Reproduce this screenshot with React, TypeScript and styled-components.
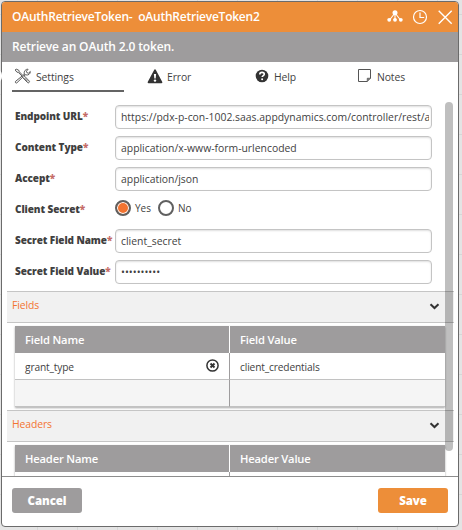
import React from "react";
import styled, { createGlobalStyle, css } from "styled-components";

const GlobalStyle = createGlobalStyle`
  *, *::before, *::after { box-sizing: border-box; }
  html, body { margin: 0; padding: 0; overflow: hidden; }
  body { font-family: "Open Sans", "Noto Sans", sans-serif; color: #3f3f3f; }
`;

const Canvas = styled.div`
  position: relative;
  width: 462px;
  height: 530px;
  padding: 1px 0 0 1px;
  overflow: hidden;
  background-color: #e4e4e4;
  background-image: linear-gradient(to right, #d6d6d6 1px, transparent 1px),
    linear-gradient(to bottom, #d6d6d6 1px, transparent 1px);
  background-size: 40px 40px;
  background-position: 37px 14px;
`;

const Connector = styled.span`
  position: absolute;
  left: -9px;
  top: 69px;
  width: 11px;
  height: 14px;
  border-radius: 0 6px 6px 0;
  background: #fff;
`;

const Dialog = styled.section`
  display: flex;
  flex-direction: column;
  width: 458px;
  height: 526px;
  border: 1px solid #6b6b6b;
  border-radius: 4px;
  background: #fff;
  overflow: hidden;
`;

const TitleBar = styled.header`
  display: flex;
  align-items: center;
  flex: 0 0 30px;
  padding: 0 5px 0 10px;
  background: #ed8e39;
  color: #fff;
`;

const Title = styled.h1`
  flex: 1;
  margin: 0;
  font-size: 12px;
  line-height: 30px;
  font-weight: 600;
  letter-spacing: -0.23px;
  white-space: pre;
`;

const TitleIcons = styled.div`
  display: flex;
  align-items: center;
  gap: 9px;
  svg { display: block; }
  svg:first-child { margin-top: -2px; }
`;

const Subtitle = styled.div`
  flex: 0 0 30px;
  padding-left: 10px;
  background: #9e9c9d;
  color: #fff;
  font-size: 12px;
  line-height: 29px;
  font-weight: 600;
  letter-spacing: -0.15px;
`;

const Tabs = styled.nav`
  display: grid;
  grid-template-columns: 112px 112px 112px 90px;
  flex: 0 0 33px;
  padding-left: 10px;
`;

const Tab = styled.div<{ $active?: boolean; $inset: number; $gap: number }>`
  display: flex;
  align-items: center;
  gap: ${(p) => p.$gap}px;
  height: 30px;
  padding-left: ${(p) => p.$inset}px;
  border-bottom: 2px solid ${(p) => (p.$active ? "#646464" : "transparent")};
  font-size: 10.4px;
  line-height: 28px;
  letter-spacing: -0.1px;
  svg { display: block; flex: none; }
  span { padding-top: 2px; }
`;

const Body = styled.main`
  position: relative;
  flex: 1;
  min-height: 0;
  overflow: hidden;
  padding: 10px 4px 0 5px;
`;

const ScrollThumb = styled.span`
  position: absolute;
  left: 443px;
  top: 7px;
  width: 8px;
  height: 349px;
  border-radius: 4px;
  background: rgba(0, 0, 0, 0.25);
`;

const Form = styled.div`
  display: flex;
  flex-direction: column;
  gap: 7px;
  padding: 0 22px 7px 8px;
`;

const FormRow = styled.div`
  display: flex;
  height: 24px;
`;

const Label = styled.label`
  flex: 0 0 100px;
  font-size: 10px;
  font-weight: 800;
  line-height: 22px;
  letter-spacing: -0.08px;
  white-space: nowrap;
  &::after { content: "*"; color: #c56b66; }
`;

const Field = styled.input`
  flex: 1;
  min-width: 0;
  height: 24px;
  padding: 0 2px 0 5px;
  border: 1px solid #c4c4c4;
  border-radius: 4px;
  outline: none;
  background: #fff;
  box-shadow: inset 0 1px 2px rgba(0, 0, 0, 0.13);
  color: #3f3f3f;
  font-family: inherit;
  font-size: 10.4px;
`;

const RadioRow = styled.div`
  display: flex;
  height: 31px;
  margin-bottom: -7px;
`;

const RadioGroup = styled.div`
  display: flex;
  height: 20px;
`;

const Option = styled.label`
  display: flex;
  align-items: center;
  gap: 4px;
  width: 43px;
  font-size: 10px;
  line-height: 18px;
`;

const RadioMark = styled.span<{ $checked?: boolean }>`
  width: 16px;
  height: 16px;
  border: 2px solid #606060;
  border-radius: 50%;
  background: ${(p) => (p.$checked ? "#f37431" : "#fff")};
  box-shadow: inset 0 0 0 1px #fff;
`;

const Section = styled.section``;

const SectionBar = styled.div`
  display: flex;
  align-items: center;
  justify-content: space-between;
  height: 32px;
  padding: 0 14px 0 5px;
  border-top: 1px solid #c5c5c5;
  border-bottom: 1px solid #c5c5c5;
  background: #f1f1f1;
  color: #f37431;
  font-size: 10.4px;
  letter-spacing: -0.1px;
  span { line-height: 26px; align-self: flex-start; }
  svg { margin-top: -2px; }
`;

const Table = styled.div`
  display: grid;
  grid-template-columns: 214px 216px;
  width: 430px;
  margin: 3px 0 3px 8px;
  box-shadow: 0 1px 2px rgba(0, 0, 0, 0.35);
`;

const cellBase = css`
  display: flex;
  align-items: center;
  justify-content: space-between;
  padding: 2px 10px 0 10px;
`;

const HeadCell = styled.div`
  ${cellBase}
  height: 27px;
  padding-top: 0;
  background: #9e9c9d;
  color: #fff;
  font-size: 11.2px;
  font-weight: 600;
  letter-spacing: -0.17px;
  & + & { border-left: 1px solid #fff; }
`;

const Cell = styled.div<{ $shade?: boolean; $divided?: boolean }>`
  ${cellBase}
  height: 27px;
  border-bottom: 1px solid #c2c2c2;
  ${(p) => p.$divided && "border-left: 1px solid #9e9c9d;"}
  background: ${(p) => (p.$shade ? "#f5f5f5" : "#fff")};
  font-size: 10.2px;
  letter-spacing: -0.15px;
  svg { display: block; margin-top: -4px; }
`;

const Footer = styled.footer`
  display: flex;
  justify-content: space-between;
  flex: 0 0 50px;
  padding: 11px 10px 0 10px;
  border-top: 1px solid #8d8d8d;
`;

const Button = styled.button<{ $primary?: boolean }>`
  width: 70px;
  height: 25px;
  padding: 0;
  border: 0;
  border-radius: 3px;
  background: ${(p) => (p.$primary ? "#ed8e39" : "#9e9c9d")};
  color: #fff;
  font: 800 11.5px/25px "Open Sans", sans-serif;
  letter-spacing: -0.1px;
`;

const NodesIcon = () => (
  <svg width="16" height="13" viewBox="0 0 16 13" fill="#fff" stroke="#fff">
    <path d="M8 3 2.5 10M8 3v7M8 3l5.5 7" fill="none" strokeWidth="1.1" />
    <circle cx="8" cy="2.7" r="2.5" stroke="none" />
    <circle cx="2.2" cy="9.8" r="1.9" stroke="none" />
    <circle cx="8" cy="9.8" r="1.9" stroke="none" />
    <circle cx="13.8" cy="9.8" r="1.9" stroke="none" />
  </svg>
);

const ClockIcon = () => (
  <svg width="16" height="16" viewBox="0 0 16 16" fill="none" stroke="#fff" strokeWidth="1.2">
    <circle cx="8" cy="8" r="6.5" />
    <path d="M8 3.5v5h4.2" />
  </svg>
);

const CloseIcon = () => (
  <svg width="16" height="16" viewBox="0 0 16 16" fill="none" stroke="#fff" strokeWidth="1.4">
    <path d="m1.7 1.7 13 13M14.7 1.7l-13 13" />
  </svg>
);

const ToolsIcon = () => (
  <svg width="17" height="16" viewBox="0 0 17 16" fill="#fff" stroke="#484848" strokeWidth="0.9" strokeLinejoin="round">
    <path d="m10.4 6.2-8.9 7.2a1 1 0 0 0 1.4 1.4l8.2-8Z" />
    <path d="M10.2 5.8C9.8 3 12 .8 14.1 1.3l-1.7 1.9.5 1.5 1.6.5L16.3 3.5c.2 2.4-2 4-4.5 3.4Z" />
    <path d="M2.2 1 4.8 2.3l.5 1.5 4.2 4.3 1.2.2 4.6 4.8c.7.8-.7 2.4-1.7 1.5L9 9.9l-.3-1.2-4.3-4.2-1.5-.4L1.2 2Z" />
    <path d="m10.3 9.8 3.4 3.6" fill="none" />
  </svg>
);

const WarningIcon = () => (
  <svg width="16" height="15" viewBox="0 0 16 15">
    <path d="M7.1.9a1 1 0 0 1 1.8 0l6.4 12.2a.8.8 0 0 1-.7 1.1H1.4a.8.8 0 0 1-.7-1.1Z" fill="#333" />
    <path d="M6.9 5h2.2l-.4 4.6H7.3Z" fill="#fff" />
    <circle cx="8" cy="11.6" r="1.2" fill="#fff" />
  </svg>
);

const HelpIcon = () => (
  <svg width="14" height="14" viewBox="0 0 14 14">
    <circle cx="7" cy="7" r="6.3" fill="#333" />
    <path d="M4.8 5.4C4.8 4 5.8 3.4 7 3.4c1.3 0 2.3.7 2.3 1.8C9.3 6.6 7.2 6.6 7.2 8.1" fill="none" stroke="#fff" strokeWidth="1.6" />
    <circle cx="7.1" cy="10.3" r="1" fill="#fff" />
  </svg>
);

const NoteIcon = () => (
  <svg width="14" height="14" viewBox="0 0 14 14" fill="#fff" stroke="#555" strokeWidth="1">
    <path d="M.5.5h12v8.8l-3.2 3.2H.5Z" />
    <path d="M12.5 9.3H9.3v3.2" />
    <path d="m9.5 9.5h3l-3 3Z" fill="#777" stroke="none" />
  </svg>
);

const ChevronIcon = () => (
  <svg width="11" height="9" viewBox="0 0 11 9" fill="none" stroke="#333" strokeWidth="2">
    <path d="m1.5 2.2 4 3.8 4-3.8" />
  </svg>
);

const RemoveIcon = () => (
  <svg width="13" height="13" viewBox="0 0 13 13" fill="none" stroke="#333">
    <circle cx="6.5" cy="6.5" r="5.6" strokeWidth="1.5" />
    <path d="m4.5 4.5 4 4m0-4-4 4" strokeWidth="1.9" />
  </svg>
);

interface TextRowProps {
  label: string;
  value: string;
  type?: string;
}

const TextRow = ({ label, value, type = "text" }: TextRowProps) => (
  <FormRow>
    <Label>{label}</Label>
    <Field type={type} value={value} readOnly />
  </FormRow>
);

interface PairSectionProps {
  title: string;
  columns: [string, string];
  row: [string, string];
}

const PairSection = ({ title, columns, row }: PairSectionProps) => (
  <Section>
    <SectionBar>
      <span>{title}</span>
      <ChevronIcon />
    </SectionBar>
    <Table>
      <HeadCell>{columns[0]}</HeadCell>
      <HeadCell>{columns[1]}</HeadCell>
      <Cell>
        {row[0]}
        {row[0] && <RemoveIcon />}
      </Cell>
      <Cell $divided>{row[1]}</Cell>
      <Cell $shade />
      <Cell $shade $divided />
    </Table>
  </Section>
);

export default function App() {
  return (
    <>
      <GlobalStyle />
      <Canvas>
        <Dialog>
          <TitleBar>
            <Title>{"OAuthRetrieveToken-  oAuthRetrieveToken2"}</Title>
            <TitleIcons>
              <NodesIcon />
              <ClockIcon />
              <CloseIcon />
            </TitleIcons>
          </TitleBar>
          <Subtitle>Retrieve an OAuth 2.0 token.</Subtitle>
          <Tabs>
            <Tab $active $inset={2} $gap={5}><ToolsIcon /><span>Settings</span></Tab>
            <Tab $inset={23} $gap={4}><WarningIcon /><span>Error</span></Tab>
            <Tab $inset={19} $gap={5}><HelpIcon /><span>Help</span></Tab>
            <Tab $inset={10} $gap={5}><NoteIcon /><span>Notes</span></Tab>
          </Tabs>
          <Body>
            <Form>
              <TextRow label="Endpoint URL" value="https://pdx-p-con-1002.saas.appdynamics.com/controller/rest/a" />
              <TextRow label="Content Type" value="application/x-www-form-urlencoded" />
              <TextRow label="Accept" value="application/json" />
              <RadioRow>
                <Label>Client Secret</Label>
                <RadioGroup>
                  <Option><RadioMark $checked />Yes</Option>
                  <Option><RadioMark />No</Option>
                </RadioGroup>
              </RadioRow>
              <TextRow label="Secret Field Name" value="client_secret" />
              <TextRow label="Secret Field Value" value="abcdefghij" type="password" />
            </Form>
            <PairSection title="Fields" columns={["Field Name", "Field Value"]} row={["grant_type", "client_credentials"]} />
            <PairSection title="Headers" columns={["Header Name", "Header Value"]} row={["", ""]} />
            <ScrollThumb />
          </Body>
          <Footer>
            <Button>Cancel</Button>
            <Button $primary>Save</Button>
          </Footer>
        </Dialog>
        <Connector />
      </Canvas>
    </>
  );
}
